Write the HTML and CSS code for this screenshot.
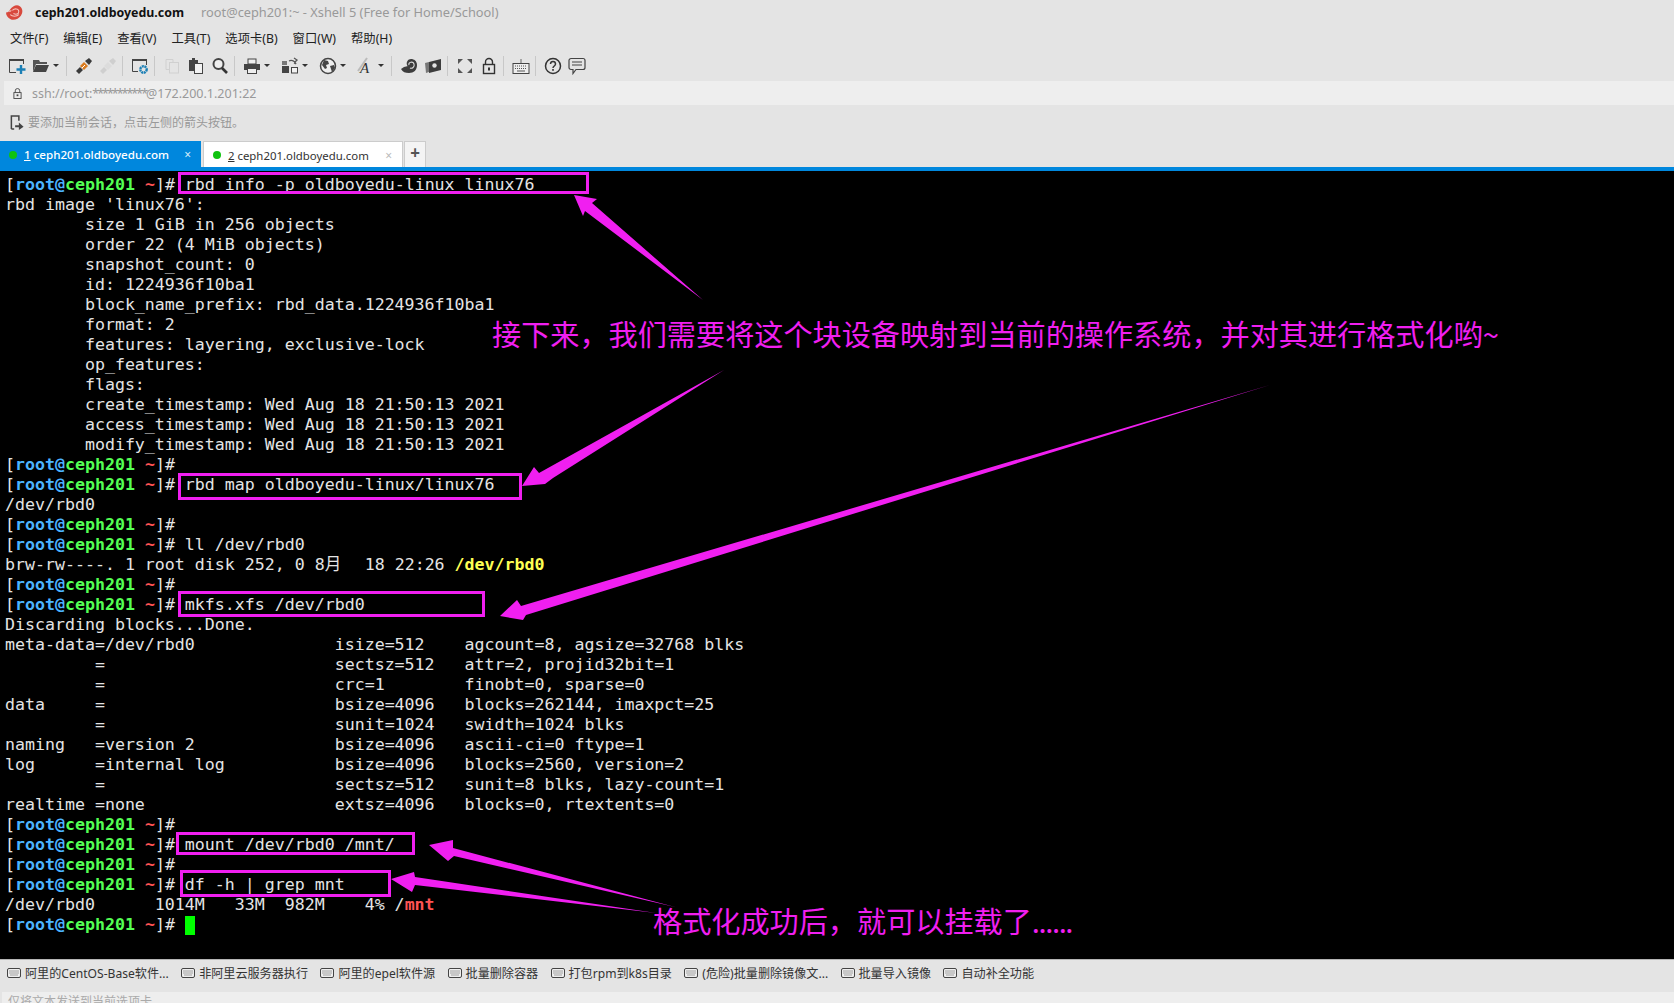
FILE: index.html
```html
<!DOCTYPE html>
<html lang="zh-CN">
<head>
<meta charset="utf-8">
<title>ceph201.oldboyedu.com - Xshell 5</title>
<link rel="stylesheet" href="styles.css">
</head>
<body>
<svg width="0" height="0" class="defs">
  <defs>
    <symbol id="kbd" viewBox="0 0 14 12"><rect x="0.5" y="1.5" width="13" height="9" rx="1.5" fill="#eee" stroke="#444"/><path d="M2.5 4h9M2.5 6h9M3.5 8h7" stroke="#555" stroke-dasharray="1 1" fill="none"/></symbol>
  </defs>
</svg>
<header class="title-bar">
  <svg class="logo" viewBox="0 0 16 14"><path d="M0 7c2 0 3-1 4-3 2-3 6-5 9-3 3 2 3 6 1 9-2 3-7 5-10 3-2-1-4-3-4-6z" fill="#d8493d"/><path d="M6 5c2-2 6-2 6 1s-3 3-5 2M4 9c2 2 6 2 8 0M3 6c0 0 1 0 2-1" stroke="#f6c4bd" fill="none"/></svg>
  <span class="title-main">ceph201.oldboyedu.com</span>
  <span class="title-sub">root@ceph201:~ - Xshell 5 (Free for Home/School)</span>
</header>
<nav class="menu-bar">
  <span>文件(F)</span><span>编辑(E)</span><span>查看(V)</span><span>工具(T)</span><span>选项卡(B)</span><span>窗口(W)</span><span>帮助(H)</span>
</nav>
<div class="tool-bar">
  <svg class="tb" viewBox="0 0 18 18"><path d="M15.5 7V2.500h-14v13H8" fill="none" stroke="#444"/><rect x="1" y="2" width="15" height="2" fill="#444"/><path d="M13 8v9M8.500 12.500h9" stroke="#1b7fb5" stroke-width="2.400"/></svg>
  <svg class="tb" viewBox="0 0 18 18"><path d="M1 15V3h6l1 2h7v2H4L1 15z" fill="#555"/><path d="M1 15l3-7h13l-3 7z" fill="#444"/></svg>
  <i class="car"></i><i class="sep"></i>
  <svg class="tb" viewBox="0 0 18 18"><path d="M1 14l4-4 3 3-4 4z" fill="#3a3a3a"/><path d="M5 9l4-4 4 4-4 4z" fill="#d97b1f"/><path d="M10 4l4-3 3 3-3 4z" fill="#3a3a3a"/><path d="M7 11l3-3" stroke="#fff"/></svg>
  <svg class="tb" viewBox="0 0 18 18"><path d="M1 14l4-4 3 3-4 4zM10 4l4-3 3 3-3 4z" fill="#cfcfcf"/><path d="M5 9l4-4 4 4-4 4z" fill="#dcdcdc"/></svg>
  <i class="sep"></i>
  <svg class="tb" viewBox="0 0 18 18"><path d="M15.500 8V2.500h-14v12H7" fill="none" stroke="#444"/><rect x="1" y="2" width="15" height="2" fill="#444"/><circle cx="12.500" cy="12.500" r="3.200" fill="none" stroke="#1b7fb5" stroke-width="2.400" stroke-dasharray="2 .6"/></svg>
  <i class="sep"></i>
  <svg class="tb" viewBox="0 0 18 18"><path d="M3 2.500h7v3M3 2.500v10h3" fill="none" stroke="#d0d0d0"/><rect x="6.500" y="5.500" width="9" height="10.500" fill="none" stroke="#d0d0d0"/></svg>
  <svg class="tb" viewBox="0 0 18 18"><path d="M2 3h9v3H7v8H2z" fill="#444"/><rect x="5" y="1" width="3" height="3" fill="#444"/><rect x="7.500" y="6.500" width="8" height="10" fill="#f2f2f2" stroke="#444"/></svg>
  <svg class="tb" viewBox="0 0 18 18"><circle cx="7.500" cy="7" r="5" fill="#eee" stroke="#444" stroke-width="2"/><path d="M11 11l5 5" stroke="#333" stroke-width="2.600"/></svg>
  <i class="sep"></i>
  <svg class="tb" viewBox="0 0 18 18"><rect x="5" y="2" width="8" height="5" fill="#eee" stroke="#444"/><rect x="1" y="7" width="16" height="6" fill="#444"/><rect x="4.500" y="11.500" width="9" height="5" fill="#eee" stroke="#444"/></svg>
  <i class="car"></i>
  <svg class="tb" viewBox="0 0 18 18"><rect x="1" y="9" width="7" height="7" fill="#444"/><rect x="10.500" y="10.500" width="6" height="5.500" fill="#f2f2f2" stroke="#444"/><rect x="1" y="4" width="5" height="4" fill="#777"/><path d="M8 4a5 5 0 0 1 7 3M13 1l3 2-2 2M15 7l-2-1" fill="none" stroke="#555" stroke-width="1.300"/></svg>
  <i class="car"></i>
  <svg class="tb" viewBox="0 0 18 18"><circle cx="9" cy="9" r="7.500" fill="#eee" stroke="#444" stroke-width="1.500"/><path d="M5 3l4 1 1 3-3 1 1 3-2 1-3-4zM11 9l4-1 1 3-3 4-1-3z" fill="#444"/></svg>
  <i class="car"></i>
  <svg class="tb" viewBox="0 0 18 18"><path d="M1 14L10 1" stroke="#bbb" stroke-width="2"/><text x="3" y="16" class="font-icon">A</text></svg>
  <i class="car"></i><i class="sep"></i>
  <svg class="tb" viewBox="0 0 18 18"><path d="M1 12c2 3 4 4 8 4 5 0 8-3 8-8 0-4-3-6-6-6S6 5 7 8c0 1 1 1 1 1l-4 1c-1 1-2 1-3 2z" fill="#3d3d3d"/><path d="M9 8c-1-3 4-4 5-1s-2 5-4 4" fill="none" stroke="#ddd" stroke-width="1.100"/></svg>
  <svg class="tb" viewBox="0 0 18 18"><path d="M1 6l4-1v10l-3 1z" fill="#777"/><path d="M5 5l12-3v11L5 16z" fill="#3d3d3d"/><circle cx="10.500" cy="8.500" r="2.200" fill="#e4e4e4"/></svg>
  <i class="sep"></i>
  <svg class="tb" viewBox="0 0 18 18"><path d="M2 2h5L2 7zM16 2v5l-5-5zM2 16v-5l5 5zM16 16h-5l5-5z" fill="#555"/></svg>
  <svg class="tb" viewBox="0 0 18 18"><rect x="3.500" y="7.500" width="11" height="9" fill="none" stroke="#333" stroke-width="1.400"/><path d="M5.500 7V5a3.500 3.500 0 0 1 7 0v2" fill="none" stroke="#333" stroke-width="1.400"/><rect x="8" y="10.500" width="2" height="3" fill="#333"/></svg>
  <i class="sep"></i>
  <svg class="tb" viewBox="0 0 18 18"><rect x="1" y="6.500" width="16" height="10" fill="#eee" stroke="#444"/><path d="M3 9h12M3 11.500h12" stroke="#555" stroke-dasharray="1 1"/><path d="M5 14h8" stroke="#555"/><path d="M9 6V2" stroke="#666"/></svg>
  <i class="sep"></i>
  <svg class="tb" viewBox="0 0 18 18"><circle cx="9" cy="9" r="7.500" fill="none" stroke="#333" stroke-width="1.500"/><path d="M6.500 7c0-3.500 5-3.500 5 0 0 2-2.500 2-2.500 4" fill="none" stroke="#333" stroke-width="1.500"/><rect x="8.200" y="12" width="1.600" height="1.800" fill="#333"/></svg>
  <svg class="tb" viewBox="0 0 18 18"><path d="M3 1.500h12a2 2 0 0 1 2 2v7a2 2 0 0 1-2 2H8l-3 4v-4H3a2 2 0 0 1-2-2v-7a2 2 0 0 1 2-2z" fill="none" stroke="#444" stroke-width="1.200"/><path d="M4 5h10M4 8h10" stroke="#444"/></svg>
</div>
<div class="address-bar">
  <svg class="addr-lock" viewBox="0 0 10 12"><rect x="1" y="5" width="8" height="6.500" fill="none" stroke="#444"/><path d="M2.500 5V3a2.500 2.500 0 0 1 5 0v2" fill="none" stroke="#444"/><rect x="4" y="7" width="2" height="2" fill="#444"/></svg>
  <span>ssh://root:<span class="stars">***********</span>@172.200.1.201:22</span>
</div>
<div class="hint-bar">
  <svg class="hint-icon" viewBox="0 0 14 16"><path d="M1 15V1h8v5M1 15h3" fill="none" stroke="#444" stroke-width="1.600"/><path d="M5 11h4V8l5 4.500-5 3.500v-3H5z" fill="#444"/></svg>
  <span>要添加当前会话，点击左侧的箭头按钮。</span>
</div>
<div class="tab-bar">
  <div class="tab active"><i class="dot"></i><span class="tab-label"><u>1</u> ceph201.oldboyedu.com</span><span class="tab-x">×</span></div>
  <div class="tab"><i class="dot"></i><span class="tab-label"><u>2</u> ceph201.oldboyedu.com</span><span class="tab-x">×</span></div>
  <div class="tab-add">+</div>
</div>
<main class="terminal">
<pre class="term-text">[<b class="u">root@</b><b class="h">ceph201</b> <b class="t">~</b>]# rbd info -p oldboyedu-linux linux76
rbd image 'linux76':
        size 1 GiB in 256 objects
        order 22 (4 MiB objects)
        snapshot_count: 0
        id: 1224936f10ba1
        block_name_prefix: rbd_data.1224936f10ba1
        format: 2
        features: layering, exclusive-lock
        op_features:
        flags:
        create_timestamp: Wed Aug 18 21:50:13 2021
        access_timestamp: Wed Aug 18 21:50:13 2021
        modify_timestamp: Wed Aug 18 21:50:13 2021
[<b class="u">root@</b><b class="h">ceph201</b> <b class="t">~</b>]#
[<b class="u">root@</b><b class="h">ceph201</b> <b class="t">~</b>]# rbd map oldboyedu-linux/linux76
/dev/rbd0
[<b class="u">root@</b><b class="h">ceph201</b> <b class="t">~</b>]#
[<b class="u">root@</b><b class="h">ceph201</b> <b class="t">~</b>]# ll /dev/rbd0
brw-rw----. 1 root disk 252, 0 8<span class="wide">月</span>  18 22:26 <b class="y">/dev/rbd0</b>
[<b class="u">root@</b><b class="h">ceph201</b> <b class="t">~</b>]#
[<b class="u">root@</b><b class="h">ceph201</b> <b class="t">~</b>]# mkfs.xfs /dev/rbd0
Discarding blocks...Done.
meta-data=/dev/rbd0              isize=512    agcount=8, agsize=32768 blks
         =                       sectsz=512   attr=2, projid32bit=1
         =                       crc=1        finobt=0, sparse=0
data     =                       bsize=4096   blocks=262144, imaxpct=25
         =                       sunit=1024   swidth=1024 blks
naming   =version 2              bsize=4096   ascii-ci=0 ftype=1
log      =internal log           bsize=4096   blocks=2560, version=2
         =                       sectsz=512   sunit=8 blks, lazy-count=1
realtime =none                   extsz=4096   blocks=0, rtextents=0
[<b class="u">root@</b><b class="h">ceph201</b> <b class="t">~</b>]#
[<b class="u">root@</b><b class="h">ceph201</b> <b class="t">~</b>]# mount /dev/rbd0 /mnt/
[<b class="u">root@</b><b class="h">ceph201</b> <b class="t">~</b>]#
[<b class="u">root@</b><b class="h">ceph201</b> <b class="t">~</b>]# df -h | grep mnt
/dev/rbd0      1014M   33M  982M    4% /<b class="t">mnt</b>
[<b class="u">root@</b><b class="h">ceph201</b> <b class="t">~</b>]# <span class="cursor"> </span></pre>
</main>
<div class="quick-bar">
  <span class="qk"><svg class="qk-icon"><use href="#kbd"/></svg>阿里的CentOS-Base软件...</span>
  <span class="qk"><svg class="qk-icon"><use href="#kbd"/></svg>非阿里云服务器执行</span>
  <span class="qk"><svg class="qk-icon"><use href="#kbd"/></svg>阿里的epel软件源</span>
  <span class="qk"><svg class="qk-icon"><use href="#kbd"/></svg>批量删除容器</span>
  <span class="qk"><svg class="qk-icon"><use href="#kbd"/></svg>打包rpm到k8s目录</span>
  <span class="qk"><svg class="qk-icon"><use href="#kbd"/></svg>(危险)批量删除镜像文...</span>
  <span class="qk"><svg class="qk-icon"><use href="#kbd"/></svg>批量导入镜像</span>
  <span class="qk"><svg class="qk-icon"><use href="#kbd"/></svg>自动补全功能</span>
</div>
<div class="compose-bar">仅将文本发送到当前选项卡</div>

<svg class="markup" viewBox="0 0 1674 1003">
  <g class="boxes">
    <rect x="179.500" y="173.500" width="408" height="19"/>
    <rect x="179.500" y="474.500" width="341" height="24"/>
    <rect x="179.500" y="592.500" width="304" height="23"/>
    <rect x="177.500" y="833.500" width="236" height="20"/>
    <rect x="181.500" y="871.500" width="208" height="24"/>
  </g>
  <g class="arrows">
    <polygon points="574,195 597,199 592,203 703,300 585,211 583,216"/>
    <polygon points="522,486 534,467 539,473 724,370 553,478 545,484"/>
    <polygon points="500,616 517,600 521,606 1270,385 526,615 523,620"/>
    <polygon points="429,845 453,840 453,848 675,907 454,856 448,861"/>
    <polygon points="391,879 414,872 415,877 656,913 415,885 412,892"/>
  </g>
</svg>
<div class="note note-top">接下来，我们需要将这个块设备映射到当前的操作系统，并对其进行格式化哟~</div>
<div class="note note-bottom">格式化成功后，就可以挂载了<span class="dots">......</span></div>
</body>
</html>
```

FILE: styles.css
```css
* { box-sizing: border-box; }
html, body { margin: 0; padding: 0; }
body {
  position: relative;
  width: 1674px;
  height: 1003px;
  overflow: hidden;
  display: flex;
  flex-direction: column;
  background: #e4e4e4;
  font-family: "Noto Sans", "Noto Sans CJK SC", sans-serif;
  font-size: 12px;
  color: #333;
}
.defs { position: absolute; }

.title-bar { height: 24px; display: flex; align-items: center; padding-left: 6px; flex: none; }
.logo { width: 17px; height: 15px; margin-right: 12px; }
.title-main { font-size: 12.400px; font-weight: 700; color: #111; width: 166px; white-space: nowrap; }
.title-sub { font-size: 12.800px; color: #999; white-space: nowrap; }

.menu-bar { height: 28px; display: flex; align-items: center; padding: 0 0 1px 10px; gap: 15px; flex: none; color: #222; font-size: 12.300px; }

.tool-bar { height: 29px; display: flex; align-items: center; padding: 0 0 2px 8px; flex: none; }
.tb { width: 18px; height: 18px; margin-right: 6px; flex: none; }
.car { width: 6px; height: 3px; margin: 0 8px 0 -3px; flex: none; border-left: 3px solid transparent; border-right: 3px solid transparent; border-top: 3px solid #333; }
.car + .tb { margin-left: 3px; }
.sep { width: 1px; height: 20px; margin: 0 8px 0 -1px; background: #c8c8c8; flex: none; }
.font-icon { font: italic 15px "Liberation Serif", serif; fill: #333; }

.address-bar { height: 24px; margin-left: 4px; background: #eeeeee; display: flex; align-items: center; padding-left: 9px; color: #999; flex: none; font-size: 12.500px; }
.addr-lock { width: 9px; height: 11px; margin-right: 10px; }
.stars { letter-spacing: -2px; }

.hint-bar { height: 36px; display: flex; align-items: center; padding: 0 0 2px 10px; color: #999; flex: none; }
.hint-icon { width: 14px; height: 15px; margin-right: 4px; }

.tab-bar { height: 26px; display: flex; flex: none; gap: 1px; }
.tab { width: 200px; display: flex; align-items: center; padding: 1px 10px 0 9px; background: #fff; border: 1px solid #ccc; border-bottom: 0; color: #333; margin-left: 1px; font-size: 11.400px; }
.tab.active { width: 201px; background: #0087dd; border: 0; color: #fff; margin-left: 0; font-size: 11.600px; }
.dot { width: 8px; height: 8px; border-radius: 50%; background: #0fc30f; margin-right: 7px; flex: none; }
.tab-label { flex: 1; white-space: nowrap; }
.tab.active .tab-label { font-weight: 500; }
.tab-x { color: #bbb; font-size: 12px; }
.tab.active .tab-x { color: #d5ecfa; }
.tab-add { width: 22px; background: #f4f4f4; border: 1px solid #ccc; border-bottom: 0; text-align: center; font-size: 17px; line-height: 22px; font-weight: 700; color: #555; }

.terminal { flex: 1; background: #000; border-top: 4px solid #0087dd; border-bottom: 1px solid #b4b4b4; min-height: 0; overflow: hidden; }
.term-text { margin: 0; padding: 4px 0 0 5px; font: 16.600px/20px "DejaVu Sans Mono", monospace; color: #e4e4e4; }
.term-text b { font-weight: 700; }
.u { color: #4cb4ff; }
.h { color: #54ff54; }
.t { color: #ff5454; }
.y { color: #ffff54; }
.wide { display: inline-block; width: 20px; font-family: "Noto Sans CJK SC", sans-serif; line-height: 1; }
.cursor { display: inline-block; width: 10px; height: 19px; background: #00ff00; vertical-align: -1px; }

.quick-bar { height: 32px; display: flex; align-items: center; padding: 0 0 6px 7px; gap: 12.400px; flex: none; color: #333; font-size: 12.100px; }
.qk { display: flex; align-items: center; white-space: nowrap; }
.qk-icon { width: 14px; height: 12px; margin-right: 4px; flex: none; }

.compose-bar { height: 11px; margin-left: 2px; background: #eeeeee; color: #aaa; flex: none; padding: 1px 0 0 6px; line-height: 18px; overflow: hidden; }

.markup { position: absolute; left: 0; top: 0; width: 1674px; height: 1003px; pointer-events: none; }
.boxes rect { fill: none; stroke: #f01ff0; stroke-width: 3; }
.arrows polygon { fill: #f01ff0; }

.note { position: absolute; font-family: "Noto Sans CJK SC", sans-serif; font-size: 29.150px; line-height: 40px; color: #f01ff0; white-space: nowrap; }
.note-top { left: 492px; top: 313px; }
.note-bottom { left: 653px; top: 900px; }
.dots { letter-spacing: -1.400px; }
```
